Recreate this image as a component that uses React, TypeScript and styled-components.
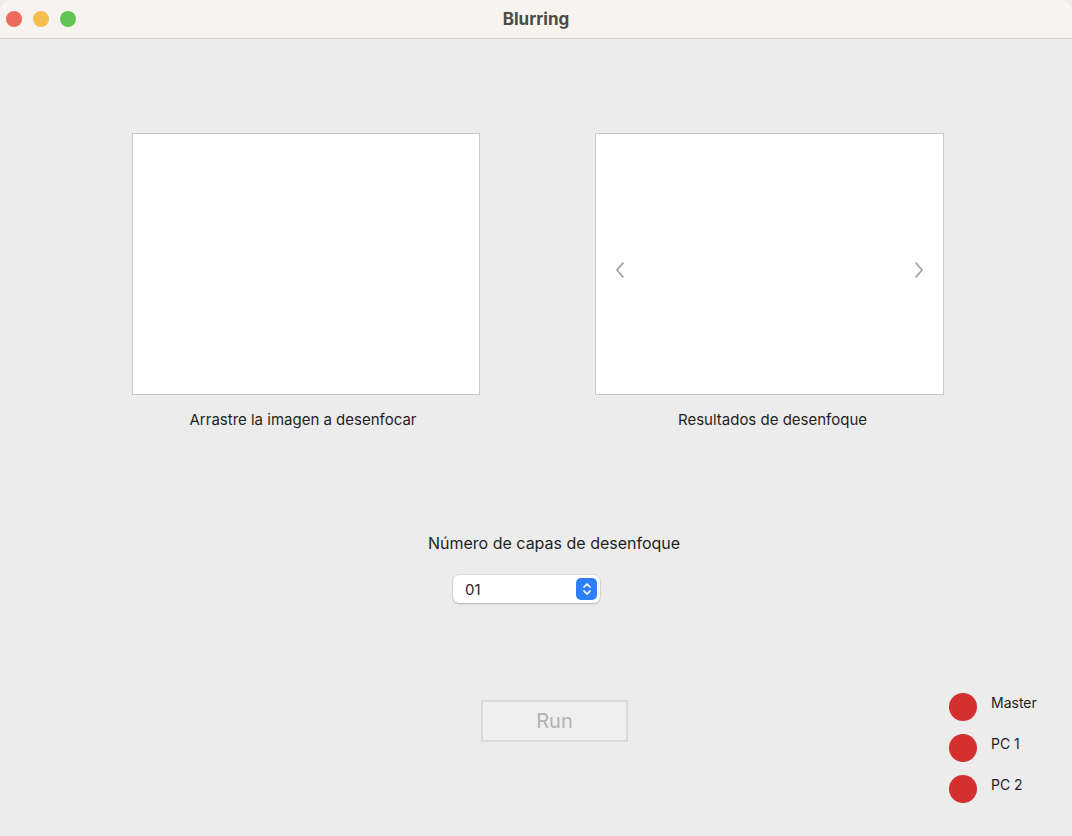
import styled, { createGlobalStyle } from 'styled-components'

const GlobalStyle = createGlobalStyle`
  html, body {
    margin: 0;
    padding: 0;
    background: #ececec;
  }
  body {
    font-family: Inter, "Liberation Sans", sans-serif;
    color: #1f1f1f;
  }
`

const ChevronLeft = () => (
  <svg width="10" height="18" viewBox="0 0 10 18" fill="none">
    <path d="M8 2 L2 9 L8 16" stroke="#9c9c9c" strokeWidth="1.6" strokeLinecap="round" strokeLinejoin="round" />
  </svg>
)

const ChevronRight = () => (
  <svg width="10" height="18" viewBox="0 0 10 18" fill="none">
    <path d="M2 2 L8 9 L2 16" stroke="#9c9c9c" strokeWidth="1.6" strokeLinecap="round" strokeLinejoin="round" />
  </svg>
)

const StepperIcon = () => (
  <svg width="10" height="16" viewBox="0 0 10 16" fill="none">
    <path d="M2 6 L5 3 L8 6 M2 10 L5 13 L8 10" stroke="#fff" strokeWidth="1.7" strokeLinecap="round" strokeLinejoin="round" />
  </svg>
)

const nodes = ['Master', 'PC 1', 'PC 2']

const App = () => {
  return (
    <Window>
      <GlobalStyle />
      <TitleBar>
        <Lights>
          <Light color="#ee6a5f" />
          <Light color="#f5be4f" />
          <Light color="#61c554" />
        </Lights>
        <Title>Blurring</Title>
      </TitleBar>
      <Body>
        <Panels>
          <Panel>
            <DropBox />
            <Caption $shift={-3}>Arrastre la imagen a desenfocar</Caption>
          </Panel>
          <Panel>
            <DropBox>
              <NavArrow>
                <ChevronLeft />
              </NavArrow>
              <NavArrow>
                <ChevronRight />
              </NavArrow>
            </DropBox>
            <Caption $shift={3}>Resultados de desenfoque</Caption>
          </Panel>
        </Panels>
        <Settings>
          <SettingsLabel>Número de capas de desenfoque</SettingsLabel>
          <Select>
            <SelectValue>01</SelectValue>
            <Stepper>
              <StepperIcon />
            </Stepper>
          </Select>
        </Settings>
        <Footer>
          <RunButton disabled>Run</RunButton>
          <StatusList>
            {nodes.map((name) => (
              <StatusRow key={name}>
                <StatusDot />
                <StatusName>{name}</StatusName>
              </StatusRow>
            ))}
          </StatusList>
        </Footer>
      </Body>
    </Window>
  )
}

export default App

const Window = styled.div`
  width: 1072px;
  height: 836px;
  display: flex;
  flex-direction: column;
  background: #ececec;
  overflow: hidden;
`

const TitleBar = styled.div`
  position: relative;
  height: 38px;
  flex-shrink: 0;
  display: flex;
  align-items: center;
  justify-content: center;
  background: #f7f3ef;
  border-bottom: 1px solid #d6d4d2;
  border-radius: 10px 10px 0 0;
`

const Lights = styled.div`
  position: absolute;
  left: 6px;
  top: 11px;
  display: flex;
  gap: 11px;
`

const Light = styled.span<{ color: string }>`
  width: 16px;
  height: 16px;
  border-radius: 50%;
  background: ${({ color }) => color};
`

const Title = styled.div`
  font-size: 17px;
  font-weight: 700;
  color: #4d4b4a;
`

const Body = styled.div`
  flex: 1;
  display: flex;
  flex-direction: column;
`

const Panels = styled.div`
  display: grid;
  grid-template-columns: 348px 349px;
  column-gap: 115px;
  margin: 94px 0 0 132px;
`

const Panel = styled.div`
  display: flex;
  flex-direction: column;
  align-items: center;
`

const DropBox = styled.div`
  box-sizing: border-box;
  width: 100%;
  height: 262px;
  background: #ffffff;
  border: 1px solid #c9c9c9;
  display: flex;
  align-items: center;
  justify-content: space-between;
  padding: 12px 19px 0 19px;
`

const NavArrow = styled.span`
  display: flex;
`

const Caption = styled.div<{ $shift: number }>`
  margin: 16px 0 0 ${({ $shift }) => $shift * 2}px;
  font-size: 15px;
  line-height: 18px;
  color: #1f1f1f;
`

const Settings = styled.div`
  display: flex;
  flex-direction: column;
  align-items: flex-start;
  margin: 105px 0 0 428px;
`

const SettingsLabel = styled.div`
  font-size: 16px;
  line-height: 19px;
  color: #1f1f1f;
`

const Select = styled.div`
  margin: 22px 0 0 25px;
  box-sizing: border-box;
  width: 147px;
  height: 28px;
  display: flex;
  align-items: center;
  justify-content: space-between;
  padding: 0 3px 0 12px;
  background: #ffffff;
  border-radius: 6px;
  box-shadow: 0 0 0 0.5px rgba(0, 0, 0, 0.12), 0 1px 2px rgba(0, 0, 0, 0.18);
`

const SelectValue = styled.span`
  font-size: 15px;
  color: #262626;
`

const Stepper = styled.span`
  width: 21px;
  height: 22px;
  border-radius: 5px;
  background: #2d7ff9;
  display: flex;
  align-items: center;
  justify-content: center;
`

const Footer = styled.div`
  display: flex;
  align-items: flex-start;
  margin-top: 90px;
  padding-left: 481px;
`

const RunButton = styled.button`
  margin-top: 7px;
  width: 147px;
  height: 42px;
  box-sizing: border-box;
  border: 2px solid #dadada;
  background: #efefef;
  color: #b3b3b3;
  font-family: Inter, "Liberation Sans", sans-serif;
  font-size: 20px;
  padding: 0;
`

const StatusList = styled.div`
  margin-left: 321px;
  display: flex;
  flex-direction: column;
  gap: 13px;
`

const StatusRow = styled.div`
  display: flex;
  align-items: flex-start;
  gap: 14px;
`

const StatusDot = styled.span`
  width: 28px;
  height: 28px;
  border-radius: 50%;
  background: #d3302f;
`

const StatusName = styled.span`
  padding-top: 2px;
  font-size: 14px;
  line-height: 16px;
  color: #1f1f1f;
`
